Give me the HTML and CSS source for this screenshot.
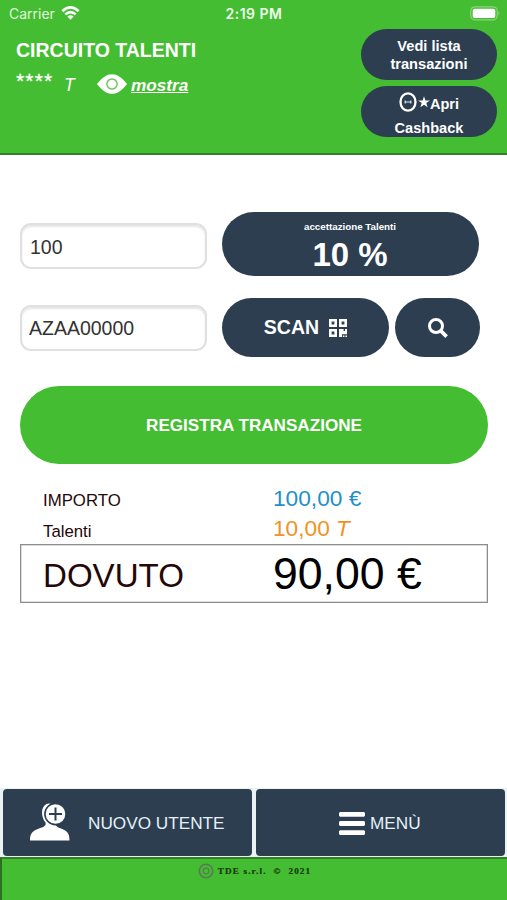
FILE: index.html
```html
<!DOCTYPE html>
<html lang="it">
<head>
<meta charset="utf-8">
<title>Circuito Talenti</title>
<link rel="stylesheet" href="styles.css">
</head>
<body>
<header class="header">
  <div class="status">
    <div class="carrier"><span>Carrier</span>
      <svg class="wifi" viewBox="0 0 18 14"><g fill="none" stroke="#fff" stroke-width="2.6"><path d="M.9 5.2Q9-2.3 17.1 5.2"/><path d="M3.8 8.4Q9 3.7 14.2 8.4"/></g><path fill="#fff" d="M5.9 10.6Q9 8 12.1 10.6L9 13.8Z"/></svg>
    </div>
    <time class="clock">2:19 PM</time>
    <svg class="battery" viewBox="0 0 31 15"><rect x=".8" y=".8" width="26.4" height="13" rx="4" fill="none" stroke="#8bd47c" stroke-width="1.2"/><rect x="2.7" y="2.7" width="22.6" height="9.2" rx="2" fill="#fff"/><path d="M28.5 5Q30.5 7.3 28.5 9.7Z" fill="#8bd47c"/></svg>
  </div>
  <div class="head-row">
    <div class="account">
      <h1 class="title">CIRCUITO TALENTI</h1>
      <div class="balance">
        <span class="stars">****</span><i class="unit">T</i>
        <svg class="eye" viewBox="0 0 30 20"><path fill="#fff" d="M0 10C5 3.3 10 .2 15 .2S25 3.3 30 10C25 16.7 20 19.8 15 19.8S5 16.7 0 10Z"/><circle cx="15" cy="10" r="5.1" fill="none" stroke="#70c95f" stroke-width="1.5"/></svg>
        <a class="show">mostra</a>
      </div>
    </div>
    <div class="head-actions">
      <button class="pill small">Vedi lista<br>transazioni</button>
      <button class="pill small cashback"><span class="cash-line"><svg class="coin" viewBox="0 0 18 20"><ellipse cx="9" cy="10" rx="7.5" ry="8.7" fill="none" stroke="#fff" stroke-width="2.3"/><path d="M6.2 8.6v2.8M11.8 8.6v2.8M6.2 10h5.6" fill="none" stroke="#d5eaf7" stroke-width="1.2"/></svg><svg class="star" viewBox="0 0 12 12"><path fill="#fff" d="M6 .2 7.4 4.4H11.9L8.3 7 9.6 11.3 6 8.7 2.4 11.3 3.7 7 .1 4.4H4.6Z"/></svg>Apri</span><span>Cashback</span></button>
    </div>
  </div>
</header>
<main class="main">
  <div class="row">
    <input class="field" value="100">
    <button class="pill accept"><small>accettazione Talenti</small><strong>10 %</strong></button>
  </div>
  <div class="row second">
    <input class="field" value="AZAA00000">
    <button class="pill scan">SCAN
      <svg class="qr" viewBox="0 0 18 18"><path fill="#fff" fill-rule="evenodd" d="M0 0h8v8H0zM2.6 2.6v2.8h2.8V2.6zM10 0h8v8h-8zM12.6 2.6v2.8h2.8V2.6zM0 10h8v8H0zM2.6 12.6v2.8h2.8v-2.8zM10 10h4.6v2H16v-2h2v5.2h-5v-1.4V18h-3zM13.8 16.4h1.6V18h-1.6zM16.4 16.4H18V18h-1.6z"/></svg>
    </button>
    <button class="pill search" aria-label="Cerca"><svg class="lens" viewBox="0 0 20 20"><circle cx="8" cy="8" r="6.5" fill="none" stroke="#fff" stroke-width="3"/><path d="m12.6 12.6 6 6" stroke="#fff" stroke-width="3.7"/></svg></button>
  </div>
  <button class="register">REGISTRA TRANSAZIONE</button>
  <section class="summary">
    <div class="line amount"><span>IMPORTO</span><span class="value blue">100,00 €</span></div>
    <div class="line talents"><span>Talenti</span><span class="value orange">10,00 <i>T</i></span></div>
    <div class="line due"><span class="due-label">DOVUTO</span><span class="total">90,00 €</span></div>
  </section>
</main>
<nav class="nav">
  <button class="tab"><svg class="user" viewBox="0 0 40 38"><path fill="#fff" d="M0 37.5C0 29 3.5 27.5 11 24.8 15.5 23.2 16 22 15.5 19.5 10.5 13 10.5 1.5 19 .5L27 2V20C25 22 26 23.2 29 24.8 36.5 27.5 39.5 29 39.5 37.5Z"/><circle cx="25.5" cy="11" r="10.6" fill="#fff" stroke="#2c3e50" stroke-width="1.6"/><path d="M25.5 4.5v13M19 11h13" stroke="#2c3e50" stroke-width="2"/></svg><span>NUOVO UTENTE</span></button>
  <button class="tab menu"><svg class="bars" viewBox="0 0 26 23"><path fill="#fff" d="M1 0h24l1 1v2.7l-1 1H1l-1-1V1zM1 9.1h24l1 1v2.8l-1 1H1l-1-1v-2.8zM1 18.2h24l1 1V22l-1 1H1l-1-1v-2.8z"/></svg><span>MENÙ</span></button>
</nav>
<footer class="footer">
  <svg class="seal" viewBox="0 0 16 16"><g fill="none" stroke="#5b7856"><circle cx="8" cy="8" r="6.7" stroke-width="1.6"/><circle cx="8" cy="8" r="2.8" stroke-width="1.2"/></g></svg>
  <span>TDE s.r.l.&nbsp; © &nbsp;2021</span>
</footer>
</body>
</html>
```
FILE: styles.css
```css
* { box-sizing: border-box; }
body {
  margin: 0;
  height: 900px;
  display: flex;
  flex-direction: column;
  overflow: hidden;
  background: #fff;
  font-family: "Liberation Sans", Arial, sans-serif;
}
button { border: 0; padding: 0; margin: 0; font: inherit; color: #fff; }
svg { display: block; flex: none; }
.header {
  height: 155px;
  flex: none;
  background: #45bd32;
  border-bottom: 2px solid #348029;
  color: #fff;
}
.status {
  height: 29px;
  display: grid;
  grid-template-columns: 1fr auto 1fr;
  align-items: center;
  padding: 0 6px 2px 9px;
  font-family: Inter, "Liberation Sans", sans-serif;
  font-size: 14px;
}
.carrier { display: flex; align-items: center; gap: 6px; color: #e0f6dc; }
.wifi { width: 19px; height: 14px; margin-top: -1px; }
.clock { font-weight: 600; letter-spacing: .5px; margin-right: 2px; color: #f0fbed; }
.battery { width: 31px; height: 15px; justify-self: end; }
.head-row { display: flex; justify-content: space-between; padding: 0 10px 0 16px; }
.title { margin: 10px 0 0; font-size: 19.5px; line-height: 22px; }
.balance { display: flex; align-items: center; height: 22px; margin-top: 12px; }
.stars { width: 48px; font-size: 21px; letter-spacing: 1.2px; line-height: 22px; margin-top: -6px; -webkit-text-stroke: .3px #fff; }
.unit { width: 33px; font-size: 17.5px; line-height: 22px; margin-top: 2px; }
.eye { width: 30px; height: 20px; margin-right: 4px; }
.show { font-size: 17.2px; font-style: italic; font-weight: bold; text-decoration: underline; margin-top: 3px; }
.head-actions { display: flex; flex-direction: column; gap: 6px; }
.pill { background: #2c3e50; font-weight: bold; display: flex; align-items: center; justify-content: center; }
.small { width: 136px; height: 51px; border-radius: 26px; font-size: 14.6px; line-height: 18px; }
.cashback { flex-direction: column; line-height: 24px; padding-top: 8px; }
.cash-line { display: flex; align-items: center; height: 24px; padding-top: 0; }
.coin { width: 18px; height: 20px; margin: -4px 1px 0 0; }
.star { width: 12px; height: 12px; margin-top: -3px; }
.main { flex: 1; padding: 57px 19px 0 20px; }
.row { display: flex; align-items: center; height: 64px; }
.second { height: 59px; margin-top: 22px; }
.field {
  width: 187px;
  height: 46px;
  margin: 4px 15px 0 0;
  padding: 2px 8px 0;
  border: 2px solid #e0e0e0;
  border-radius: 11px;
  outline: 0;
  box-shadow: inset 0 2px 2px #e6e6e6;
  background: #fff;
  font: 19.5px "Liberation Sans", Arial, sans-serif;
  color: #333;
}
.second .field { margin-top: 1px; padding: 0 8px 0 7px; }
.accept { width: 257px; height: 64px; border-radius: 32px; flex-direction: column; padding: 5px 1px 0 0; }
.accept small { font-size: 9.8px; line-height: 12px; margin-top: 3px; letter-spacing: -.02px; }
.accept strong { font-size: 33px; line-height: 43px; }
.scan { width: 167px; height: 59px; border-radius: 30px; gap: 10px; font-size: 19.5px; }
.qr { width: 18px; height: 18px; }
.search { width: 85px; height: 59px; margin-left: 6px; border-radius: 30px; }
.lens { width: 20px; height: 20px; }
.register {
  display: block;
  width: 468px;
  height: 78px;
  margin-top: 29px;
  padding-top: 2px;
  border-radius: 39px;
  background: #45bd32;
  font-size: 17.1px;
  font-weight: bold;
}
.summary { padding-top: 19px; }
.line { display: grid; grid-template-columns: 230px 1fr; align-items: baseline; padding-left: 23px; color: #250707; font-size: 16.8px; }
.amount { height: 30px; line-height: 30px; }
.talents { height: 31px; line-height: 33px; }
.value { font-size: 22.7px; margin-bottom: 1px; }
.blue { color: #238fc7; position: relative; }
.orange { color: #f29224; position: relative; top: -1px; }
.due { width: 468px; height: 59px; border: 1.5px solid #8d8d8d; box-shadow: inset 0 0 0 .5px #bbb; padding-left: 22px; line-height: 57px; font-size: 33.4px; }
.due-label { position: relative; top: -2px; font-size: 33.1px; }
.total { font-size: 44.6px; color: #000; }
.nav { display: grid; grid-template-columns: 249px 249px; gap: 4px; height: 69px; padding: 1px 3px; flex: none; background: #eaf2f4; }
.tab { height: 67px; border-radius: 4px; background: #2c3e50; color: #e5f1f7; font-size: 17.2px; display: flex; align-items: center; padding: 2px 0 0 27px; }
.user { width: 40px; height: 38px; margin: -3px 18px 0 0; }
.menu { padding-left: 83px; }
.bars { width: 26px; height: 23px; margin-right: 5px; margin-top: -1px; }
.footer {
  height: 43px;
  flex: none;
  display: flex;
  justify-content: center;
  align-items: flex-start;
  gap: 4px;
  padding: 4px 0 0;
  border-top: 2px solid #348029;
  border-left: 2px solid #2b7220;
  background: #45bd32;
  color: #15380f;
  font: bold 9.2px/16px "Liberation Serif", serif;
  letter-spacing: 1.15px;
  -webkit-text-stroke: .2px #15380f;
}
.seal { width: 16px; height: 16px; }
```
